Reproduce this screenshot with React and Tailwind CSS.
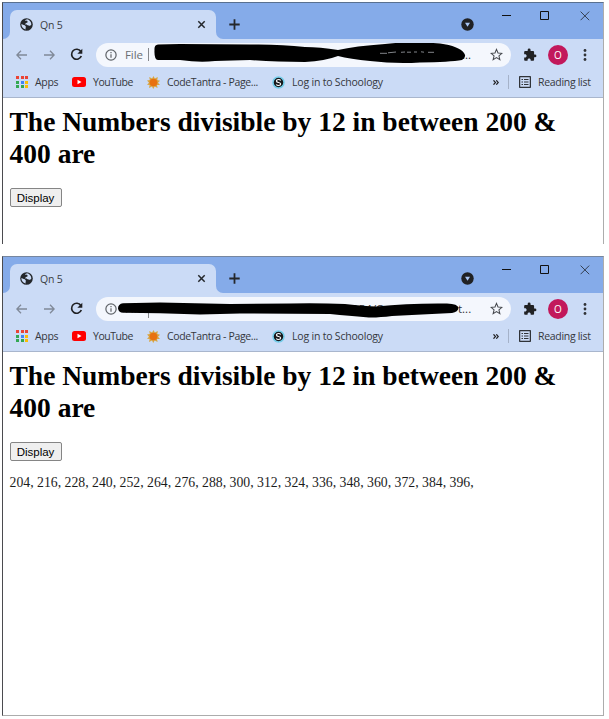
import React from "react";

const UI = "font-['Open_Sans','Noto_Sans',sans-serif]";

function Globe() {
  return (
    <svg width="13" height="13" viewBox="0 0 24 24" className="shrink-0">
      <circle cx="12" cy="12" r="11.6" fill="#24272b" />
      <path d="M2.500 11c3 2 6 1 8 4 1 2-1 3 0 6-5-1-8-5-8-10zM9 4c2 2 5 0 5 3s-5 2-4 4.500 4 .5 7 3c2 0 3-1 4-2.500 0-5-4-9-8-9.500z" fill="#cbdbf6" />
    </svg>
  );
}

function TabStrip() {
  return (
    <div className="flex h-9 bg-[#85abe9]">
      <div className="w-[7px] shrink-0 bg-[#cbdbf6]">
        <div className="h-full rounded-br-[7px] bg-[#85abe9]" />
      </div>
      <div className="mt-[7px] flex w-[206px] shrink-0 items-center rounded-t-[7px] bg-[#cbdbf6] pl-[10px]">
        <Globe />
        <span className="ml-[7px] w-[144px] text-[10.5px] leading-[14px] tracking-[-0.2px] text-[#3c4043]">Qn 5</span>
        <svg width="9" height="9" viewBox="0 0 9 9" className="ml-[13px]">
          <path d="M1.3 1.3l6.4 6.4M7.7 1.3L1.3 7.7" stroke="#24272b" strokeWidth="1.5" />
        </svg>
      </div>
      <div className="w-[7px] shrink-0 bg-[#cbdbf6]">
        <div className="h-full rounded-bl-[7px] bg-[#85abe9]" />
      </div>
      <svg width="11" height="11" viewBox="0 0 11 11" className="ml-[6px] mt-[16px] shrink-0">
        <path d="M5.5 0.3v10.4M0.3 5.5h10.4" stroke="#24272b" strokeWidth="1.8" />
      </svg>
      <svg width="13" height="13" viewBox="0 0 13 13" className="ml-[221px] mt-[15px] shrink-0">
        <circle cx="6.5" cy="6.5" r="6.2" fill="#202124" />
        <path d="M4 4.7h5L6.5 8.8z" fill="#a9c6f5" />
      </svg>
      <svg width="9" height="9" viewBox="0 0 9 9" className="ml-[28px] mt-[8px] shrink-0">
        <path d="M0 4.5h9" stroke="#111" />
      </svg>
      <svg width="9" height="9" viewBox="0 0 9 9" className="ml-[29px] mt-[8px] shrink-0">
        <path d="M.5.5h8v8h-8z" stroke="#111" fill="none" />
      </svg>
      <svg width="10" height="10" viewBox="0 0 10 10" className="ml-[31px] mt-[8px] shrink-0">
        <path d="M.6.6l8.6 8.6M9.2.6L.6 9.2" stroke="#2b3442" strokeWidth=".9" />
      </svg>
    </div>
  );
}

function AddressBar({ second }) {
  return (
    <div className="relative ml-[13px] flex h-6 w-[415px] shrink-0 items-center rounded-full bg-[#f4f7fd] pl-[9px]">
      <svg width="12" height="12" viewBox="0 0 11 11" className="shrink-0">
        <circle cx="5.5" cy="5.5" r="4.7" fill="none" stroke="#5f6368" strokeWidth="1.1" />
        <path d="M5.5 4.8v3.2M5.5 2.8v1.1" stroke="#5f6368" strokeWidth="1.1" />
      </svg>
      <span className="ml-[8px] w-[23px] text-[11.5px] leading-[14px] tracking-[-0.1px] text-[#6a6e73]">File</span>
      <span className={`w-px bg-[#85888d] ${second ? "mt-[4px] h-[15px]" : "h-[13px]"}`} />
      <span className={second ? "ml-[190px] w-[119px] overflow-hidden whitespace-nowrap text-[11.5px] leading-[14px] text-[#303236]" : "w-[310px]"}>
        {second ? "60154/Cod" : ""}
      </span>
      <span className={`text-[11.5px] leading-[14px] text-[#303236] ${second ? "" : "pl-[3px]"}`}>{second ? "t..." : "..."}</span>
      <svg width="13" height="13" viewBox="0 0 24 24" className="absolute right-[8px] top-[5px]">
        <path d="M12 2.5l2.8 6.7 7.2.6-5.500 4.700 1.700 7.100L12 17.800 5.800 21.600l1.700-7.100L2 9.800l7.200-.6z" fill="none" stroke="#44474c" strokeWidth="1.900" />
      </svg>
      {second ? (
        <svg width="415" height="24" viewBox="96 297 415 24" className="absolute left-0 top-0">
          <path d="M123 303.300Q118 304 118 308.500Q119 313.300 124 312.800L160 313.300 200 314.500 240 313.500 330 314Q350 316 366 317.300Q376 318 392 316L452 313Q458 312 458.500 308Q458 303.800 447 303.500Q410 303 376 306.500Q365 306 345 304Q320 303 290 303.500L230 304 160 302.500Z" fill="#000" />
        </svg>
      ) : (
        <svg width="415" height="24" viewBox="96 43 415 24" className="absolute left-0 top-0">
          <path d="M158 44.500Q154 45 154.500 50Q154 60 158 60L180 60Q200 63 215 61L250 60Q275 62 305 62Q325 61 338 56Q350 59 370 61Q395 64 420 62.500Q450 62 462 60Q467 57 464 53Q459 46 440 43.500Q410 41 385 44Q355 46 338 50Q320 47 305 47Q280 44 250 44.500L180 44Z" fill="#000" />
          <path d="M380 53.300h7 M388 52.800l8-.8 M401 52.300l4-.3 M407 52.200h4 M414 52h3 M421 51.800l3 .4 M428 52.300h6" stroke="#b9bdc4" strokeWidth=".7" />
        </svg>
      )}
    </div>
  );
}

function Toolbar({ second }) {
  return (
    <div className="flex h-[31px] items-center pl-[13px]">
      <svg width="11" height="10" viewBox="0 0 11 10" className="shrink-0">
        <path d="M11 5H1M5 .8L.9 5 5 9.200" fill="none" stroke="#808998" strokeWidth="1.300" />
      </svg>
      <svg width="11" height="10" viewBox="0 0 11 10" className="ml-[17px] shrink-0">
        <path d="M0 5h10M6 .8L10.100 5 6 9.200" fill="none" stroke="#808998" strokeWidth="1.300" />
      </svg>
      <svg width="13" height="13" viewBox="0 0 13 13" className="ml-[15px] shrink-0">
        <path d="M10.800 3.500A5 5 0 1 0 11.300 8" fill="none" stroke="#202124" strokeWidth="1.700" />
        <path d="M12.300.8v5h-5z" fill="#202124" />
      </svg>
      <AddressBar second={second} />
      <svg width="14" height="14" viewBox="0 0 24 24" className="ml-[12px] shrink-0">
        <path d="M20.500 11H19V7c0-1.100-.9-2-2-2h-4V3.500a2.500 2.500 0 0 0-5 0V5H4c-1.100 0-2 .9-2 2v3.800h1.500c1.500 0 2.700 1.200 2.700 2.700S5 16.200 3.500 16.200H2V20c0 1.100.9 2 2 2h3.800v-1.500c0-1.500 1.200-2.700 2.700-2.700s2.700 1.200 2.700 2.700V22H17c1.100 0 2-.9 2-2v-4h1.500a2.500 2.500 0 0 0 0-5z" fill="#202124" />
      </svg>
      <span className="ml-[11px] flex size-5 shrink-0 items-center justify-center rounded-full bg-[#c2185b] text-[10px] leading-none text-white">O</span>
      <svg width="4" height="12" viewBox="0 0 4 12" className="ml-[15px] shrink-0">
        <circle cx="2" cy="1.500" r="1.400" fill="#303236" />
        <circle cx="2" cy="6" r="1.400" fill="#303236" />
        <circle cx="2" cy="10.500" r="1.400" fill="#303236" />
      </svg>
    </div>
  );
}

const DOTS = ["#ea4335", "#ea4335", "#ea4335", "#34a853", "#4285f4", "#fbbc05", "#34a853", "#34a853", "#fbbc05"];

function Bookmarks() {
  return (
    <div className="flex h-[28px] items-center whitespace-nowrap border-b border-[#a9b6cd] pb-[3px] pl-[13px] text-[10.5px] leading-[14px] text-[#35383d]">
      <div className="grid w-[12px] shrink-0 grid-cols-3 gap-[1.5px]">
        {DOTS.map((c, i) => (
          <i key={i} className="size-[3px]" style={{ background: c }} />
        ))}
      </div>
      <span className="ml-[7px] w-[37px] shrink-0 tracking-[-0.3px]">Apps</span>
      <svg width="14" height="10" viewBox="0 0 14 10" className="shrink-0">
        <rect width="14" height="10" rx="2.500" fill="#f00" />
        <path d="M5.500 2.800v4.400L9.500 5z" fill="#fff" />
      </svg>
      <span className="ml-[7px] w-[54px] shrink-0 tracking-[-0.45px]">YouTube</span>
      <svg width="13" height="13" viewBox="0 0 13 13" className="shrink-0">
        <path d="M6.500 0l1.300 2.500L10.800 1 10.300 4l2.700.8-2 1.900 2 2.300-3-.1.600 3-2.900-1.400L6.200 13 5 10.500 2 12l.6-3L0 8.700l2-2L0 4.500l2.800-.4L2.200 1l2.900 1.500z" fill="#d9a441" />
        <circle cx="6.500" cy="6.500" r="3.800" fill="#e8710f" />
      </svg>
      <span className="ml-[7px] w-[105px] shrink-0 tracking-[-0.35px]">CodeTantra - Page...</span>
      <svg width="13" height="13" viewBox="0 0 13 13" className="shrink-0">
        <circle cx="6.500" cy="6.500" r="5.500" fill="#17191c" stroke="#74cdea" strokeWidth="1.500" />
        <path d="M8.700 4.500Q8 3.500 6.500 3.500 4.500 3.500 4.500 5 4.500 6.200 6.500 6.500 8.600 6.800 8.600 8 8.600 9.500 6.500 9.500 5 9.500 4.200 8.500" fill="none" stroke="#fff" strokeWidth="1.200" />
      </svg>
      <span className="ml-[7px] w-[201px] shrink-0 tracking-[-0.2px]">Log in to Schoology</span>
      <svg width="6" height="5" viewBox="0 0 6 5" className="shrink-0">
        <path d="M.5.3l2 2.200-2 2.200M3.300.3l2 2.200-2 2.200" fill="none" stroke="#202124" strokeWidth="1.200" />
      </svg>
      <i className="ml-[9px] h-[14px] w-px shrink-0 bg-[#a5b2c9]" />
      <svg width="12" height="12" viewBox="0 0 12 12" className="ml-[10px] shrink-0">
        <rect x=".6" y=".6" width="10.800" height="10.800" rx=".5" fill="none" stroke="#303338" strokeWidth="1.300" />
        <path d="M2.500 3.500H4M5 3.500h4.500M2.500 6H4M5 6h4.500M2.500 8.500H4M5 8.500h4.500" stroke="#303338" strokeWidth="1.200" />
      </svg>
      <span className="ml-[7px] tracking-[-0.3px]">Reading list</span>
    </div>
  );
}

function Browser({ second }) {
  return (
    <div className={`ml-[2px] w-[602px] border-l border-r border-t border-l-[#4b4b4f] border-r-[#acacac] ${second ? "mt-3 h-[460px] border-b border-b-[#acacac] border-t-[#76869f]" : "h-[242px] border-t-[#59708f]"}`}>
      <div className={`bg-[#cbdbf6] ${UI}`}>
        <TabStrip />
        <Toolbar second={second} />
        <Bookmarks />
      </div>
      <div className="pl-[6.500px] pt-[8px] font-['Liberation_Serif',serif] text-black">
        <h1 className="whitespace-nowrap text-[27.5px] font-bold leading-[32px]">
          The Numbers divisible by 12 in between 200 &amp;
          <br />
          400 are
        </h1>
        <button className="mt-[18px] block h-[19px] w-[52px] rounded-[2px] border border-[#858585] bg-[#efefef] font-['Liberation_Sans',sans-serif] text-[11.5px] leading-[16px]">
          Display
        </button>
        {second && (
          <p className="mt-[14px] whitespace-nowrap text-[13.75px] leading-[16px] text-[#1c1c1c]">
            204, 216, 228, 240, 252, 264, 276, 288, 300, 312, 324, 336, 348, 360, 372, 384, 396,
          </p>
        )}
      </div>
    </div>
  );
}

export default function App() {
  return (
    <div className="h-[719px] w-[609px] overflow-hidden bg-white pt-[2px]">
      <Browser />
      <Browser second />
    </div>
  );
}
